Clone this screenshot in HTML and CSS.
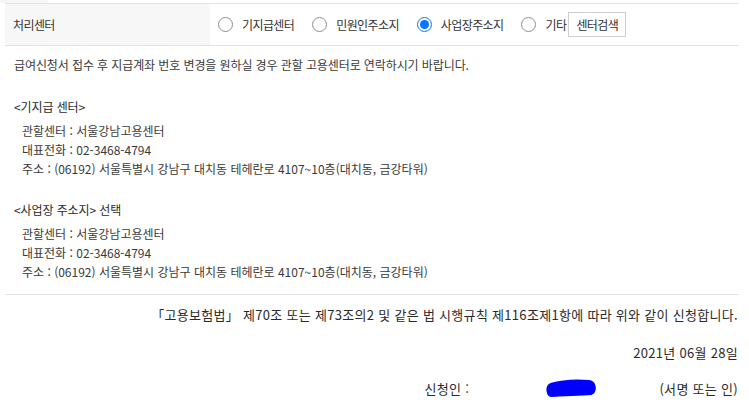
FILE: index.html
```html
<!DOCTYPE html>
<html lang="ko">
<head>
  <meta charset="UTF-8" />
  <title>처리센터 선택</title>
  <link rel="stylesheet" href="styles.css">
</head>
<body>
  <div class="tab-edge"></div>

  <div class="wrap">
    <div class="field-row">
      <div class="field-label">처리센터</div>
      <div class="field-value">
        <label class="opt"><span class="radio"></span>기지급센터</label>
        <label class="opt"><span class="radio"></span>민원인주소지</label>
        <label class="opt"><span class="radio checked"></span>사업장주소지</label>
        <label class="opt last"><span class="radio"></span>기타</label>
        <button class="btn-search">센터검색</button>
      </div>
    </div>

    <p class="notice">급여신청서 접수 후 지급계좌 번호 변경을 원하실 경우 관할 고용센터로 연락하시기 바랍니다.</p>

    <div class="center-block">
      <div class="center-title">&lt;기지급 센터&gt;</div>
      <ul class="center-info">
        <li>관할센터 : 서울강남고용센터</li>
        <li>대표전화 : 02-3468-4794</li>
        <li>주소 : (06192) 서울특별시 강남구 대치동 테헤란로 4107~10층(대치동, 금강타워)</li>
      </ul>
    </div>

    <div class="center-block">
      <div class="center-title">&lt;사업장 주소지&gt; 선택</div>
      <ul class="center-info">
        <li>관할센터 : 서울강남고용센터</li>
        <li>대표전화 : 02-3468-4794</li>
        <li>주소 : (06192) 서울특별시 강남구 대치동 테헤란로 4107~10층(대치동, 금강타워)</li>
      </ul>
    </div>

    <div class="sign-area">
      <p class="law">「고용보험법」 제70조 또는 제73조의2 및 같은 법 시행규칙 제116조제1항에 따라 위와 같이 신청합니다.</p>
      <p class="date">2021년 06월 28일</p>
      <div class="signer">
        <span class="signer-label">신청인 :</span>
        <svg class="scribble" width="52" height="19" viewBox="0 0 52 19">
          <path d="M6 6 C 16 3, 32 2, 44 3 C 50 4, 50 12, 46 14 C 34 15, 18 15, 7 16 C 3 16, 2 8, 6 6 Z" fill="#0000ff" stroke="#0000ff" stroke-width="4" stroke-linejoin="round"/>
        </svg>
        <span class="seal">(서명 또는 인)</span>
      </div>
    </div>
  </div>
</body>
</html>
```

FILE: styles.css
```css
body {
  margin: 0;
  background: #fff;
  color: #333;
  font-family: "Noto Sans CJK KR", "Noto Sans", sans-serif;
  font-size: 12px;
  letter-spacing: -0.1px;
}

.tab-edge {
  width: 48px;
  height: 3px;
  background: #f6f6f6;
}

.wrap {
  width: 734px;
  margin-left: 5px;
}

.field-row {
  display: flex;
  height: 41px;
  border-top: 1px solid #e3e3e3;
  border-bottom: 1px solid #e3e3e3;
  letter-spacing: -0.6px;
}

.field-label {
  width: 197px;
  padding-left: 8px;
  background: #f7f7f7;
  display: flex;
  align-items: center;
}

.field-value {
  display: flex;
  align-items: center;
  padding-left: 8px;
}

.opt {
  display: flex;
  align-items: center;
  margin-right: 18px;
}

.opt.last {
  margin-right: 2px;
}

.radio {
  width: 13px;
  height: 13px;
  border: 1px solid #8f8f8f;
  border-radius: 50%;
  margin-right: 9px;
  box-sizing: content-box;
  position: relative;
}

.radio.checked {
  border-color: #0a75ff;
}

.radio.checked::after {
  content: "";
  position: absolute;
  left: 2px;
  top: 2px;
  width: 9px;
  height: 9px;
  border-radius: 50%;
  background: #0a75ff;
}

.btn-search {
  height: 25px;
  padding: 0 7px;
  border: 1px solid #cfcfcf;
  background: #fff;
  color: #333;
  font-family: inherit;
  font-size: 12px;
  letter-spacing: -0.6px;
}

.notice {
  margin: 9px 0 0;
  padding-left: 9px;
  line-height: 20px;
  color: #3a3a3a;
}

.center-block {
  margin-top: 22px;
  padding-left: 9px;
}

.center-title {
  line-height: 20px;
  color: #2a2a2a;
}

.center-info {
  list-style: none;
  margin: 4px 0 0;
  padding-left: 8px;
  line-height: 19px;
  color: #3a3a3a;
  letter-spacing: 0;
}

.sign-area {
  margin-top: 13px;
  border-top: 1px solid #e6e6e6;
  padding: 10px 1px 0 0;
  text-align: right;
  color: #2a2a2a;
  font-size: 13px;
  letter-spacing: 0.3px;
}

.law {
  margin: 0;
  line-height: 20px;
}

.date {
  margin: 18px 0 0;
  line-height: 20px;
}

.signer {
  display: flex;
  justify-content: flex-end;
  align-items: center;
  margin-top: 15px;
  height: 20px;
}

.signer-label {
  width: 121px;
  text-align: left;
}

.scribble {
  display: block;
}

.seal {
  margin-left: 62px;
}
```
